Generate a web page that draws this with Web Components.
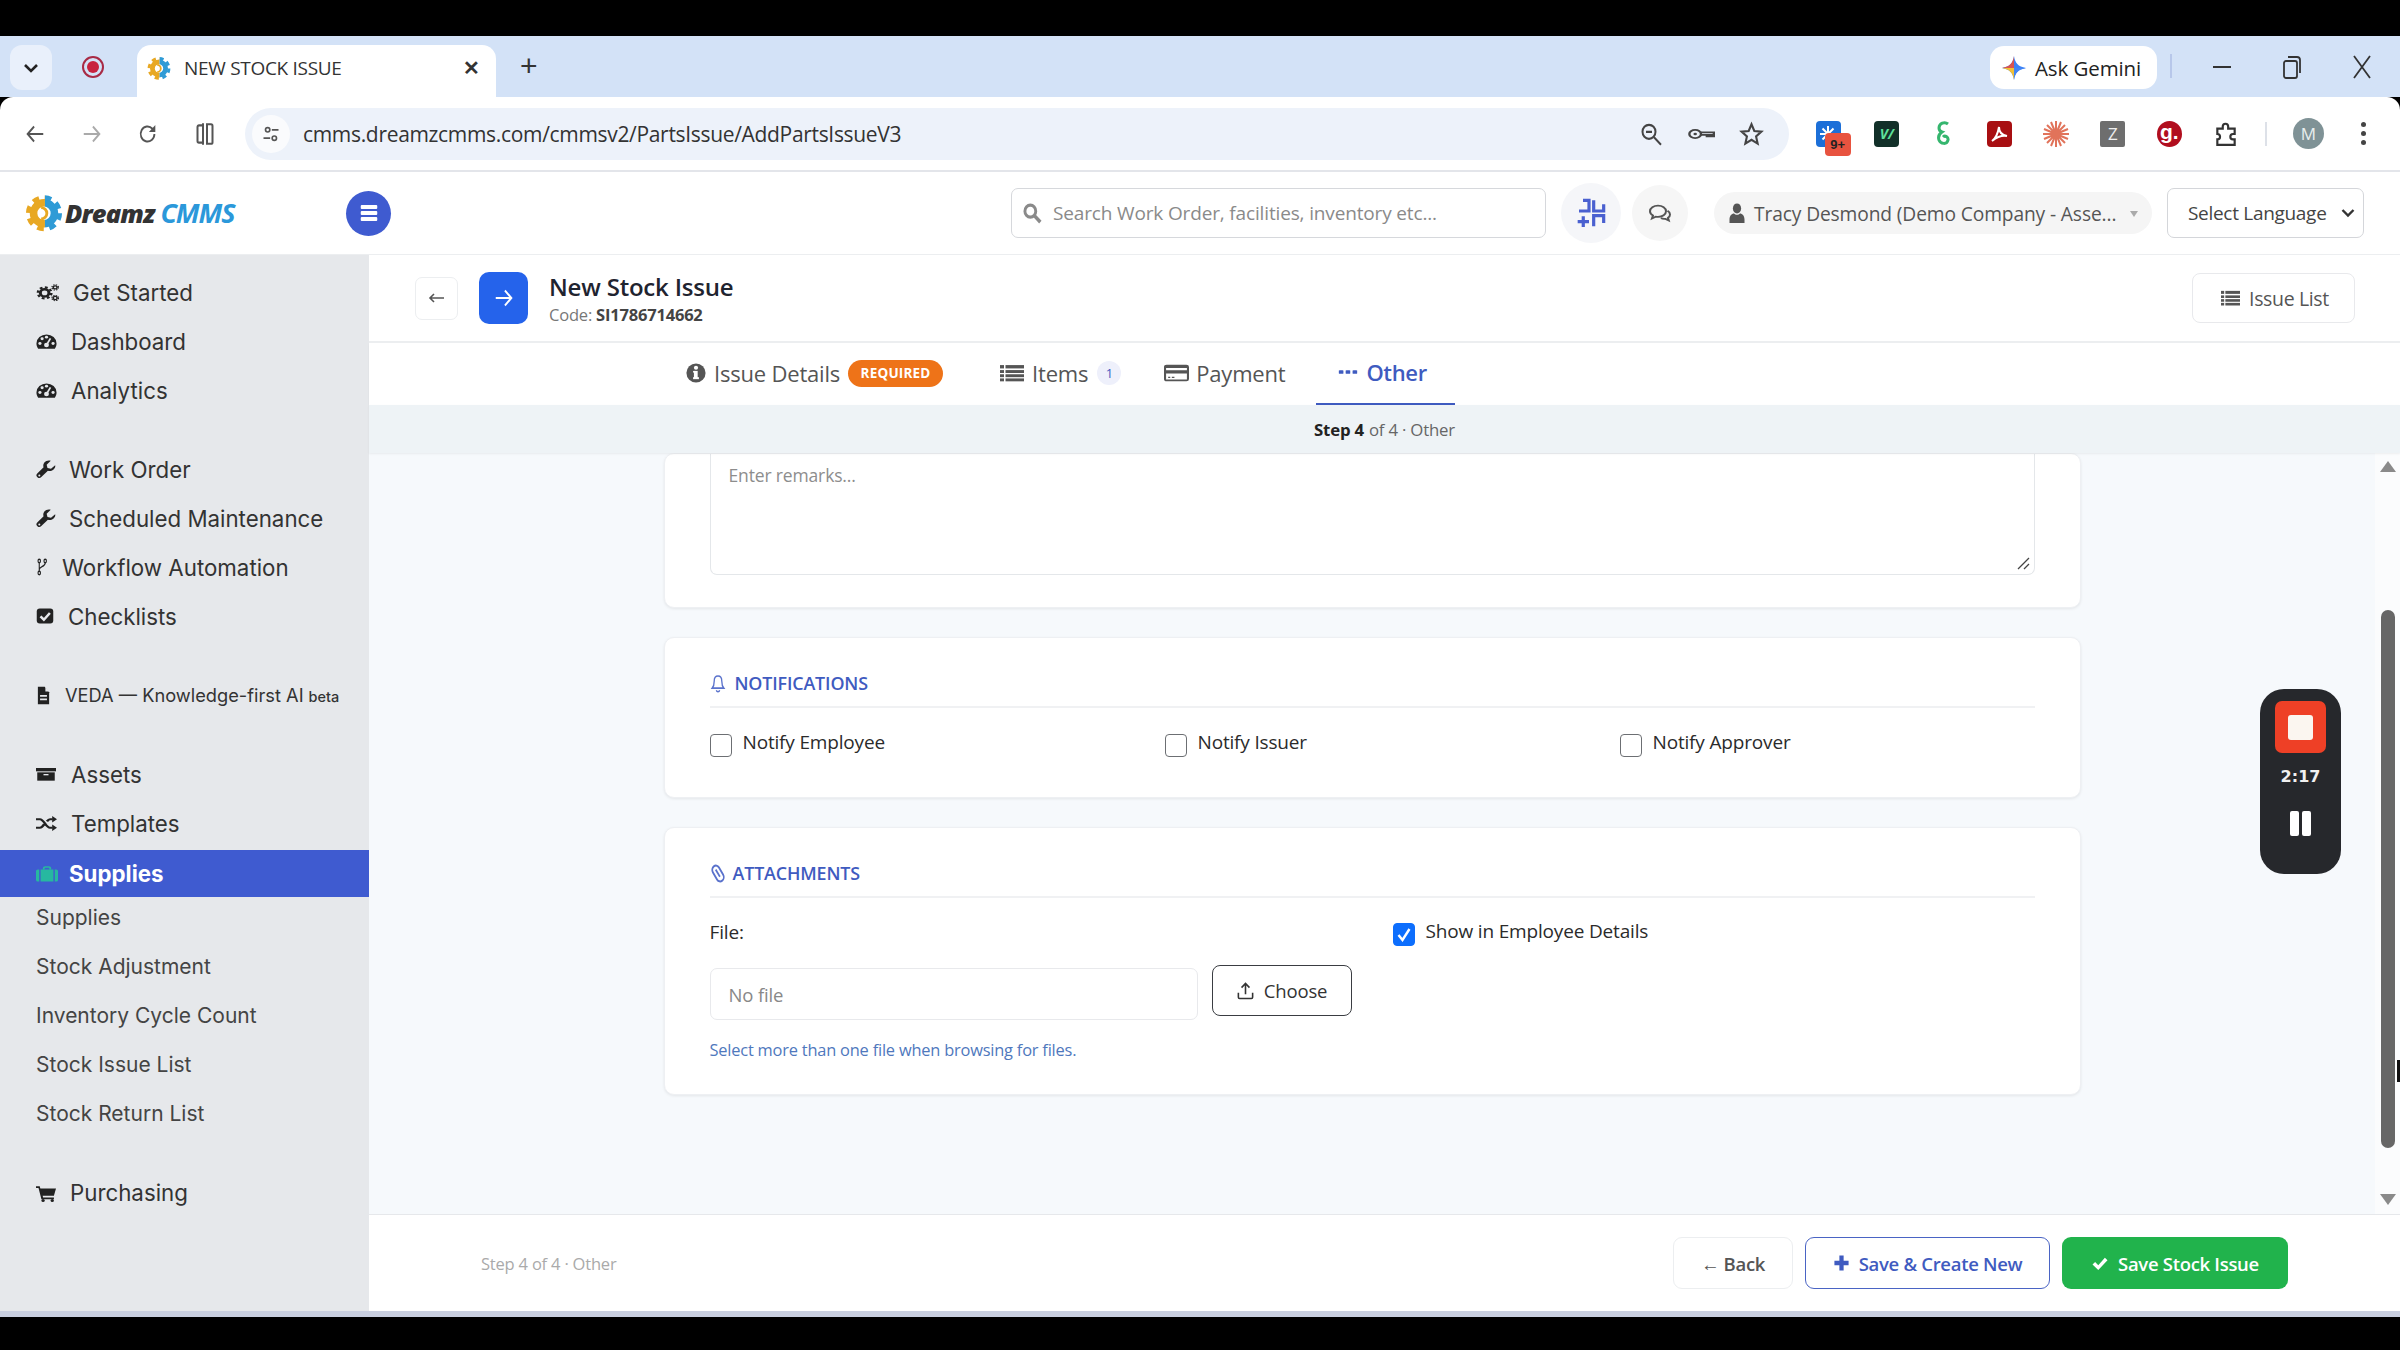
<!DOCTYPE html>
<html lang="en"><head><meta charset="utf-8"><title>New Stock Issue</title>
<style>
html,body{margin:0;padding:0;background:#000;height:1350px;overflow:hidden}
body{font-family:"Open Sans","Noto Sans",sans-serif;color:#222}
stock-app{display:block}
</style></head><body>
<stock-app></stock-app>
<script>
const ICONS={
back:'<path d="M21 12H4M11 5l-7 7 7 7" fill="none" stroke="currentColor" stroke-width="2"/>',
reload:'<path d="M19 12a7.5 7.5 0 1 1-2.2-5.3L19 9" fill="none" stroke="currentColor" stroke-width="2"/><path d="M20 3v7h-7z" fill="currentColor"/>',
split:'<path d="M10 4H6a1.5 1.5 0 0 0-1.5 1.5v13A1.5 1.5 0 0 0 6 20h4M14 3h4a1.5 1.5 0 0 1 1.5 1.5v15a1.5 1.5 0 0 1-1.5 1.5h-4zM10 2v20" fill="none" stroke="currentColor" stroke-width="2"/>',
tune:'<circle cx="8" cy="7" r="2.6" fill="none" stroke="currentColor" stroke-width="2"/><circle cx="16" cy="17" r="2.6" fill="none" stroke="currentColor" stroke-width="2"/><path d="M13 7h8M3 17h8" stroke="currentColor" stroke-width="2"/>',
zoomout:'<circle cx="10" cy="10" r="6.5" fill="none" stroke="currentColor" stroke-width="2"/><path d="M15 15l7 7M7 10h6" stroke="currentColor" stroke-width="2"/>',
key:'<circle cx="7" cy="12" r="5" fill="none" stroke="currentColor" stroke-width="2"/><circle cx="7" cy="12" r="1.5" fill="currentColor"/><path d="M12 10h11v5h-2v-2h-2v2h-2v-2h-5" fill="none" stroke="currentColor" stroke-width="2"/>',
star:'<path d="M12 3l2.7 6.2 6.8.6-5.1 4.5 1.5 6.6L12 17.4l-5.900 3.5 1.5-6.600L2.500 9.800l6.800-.6z" fill="none" stroke="currentColor" stroke-width="2"/>',
puzzle:'<path d="M4 7h5V5a2.500 2.500 0 0 1 5 0v2h6v5h-1.500a2.500 2.500 0 0 0 0 5H20v5H4v-5a2.500 2.500 0 0 0 0-5z" fill="none" stroke="currentColor" stroke-width="2"/>',
search:'<circle cx="10" cy="10" r="6.500" fill="none" stroke="currentColor" stroke-width="3.500"/><path d="M15 15l7 7" stroke="currentColor" stroke-width="4"/>',
grid:'<g fill="none" stroke="currentColor" stroke-width="2.400"><path d="M3 10.500h7.500V2.500H6M14 2.500v8h7.500V5.500M2 18.500h8.500M6.200 14.500v8M14 22v-8h7.500v5.500"/></g>',
chat:'<g fill="none" stroke="currentColor" stroke-width="2"><path d="M10 4C5.600 4 2 6.700 2 10c0 1.900 1.200 3.600 3 4.700L4 18l3.700-2c.7.2 1.500.3 2.300.3 4.400 0 8-2.700 8-6.300S14.400 4 10 4z"/><path d="M19.500 9.500c1.500 1 2.500 2.500 2.500 4 0 1.500-.8 2.800-2 3.700l.8 3-3.300-1.800c-1.500.2-3.300 0-4.500-.9"/></g>',
user:'<circle cx="12" cy="7" r="5.500" fill="currentColor"/><path d="M2 23v-4c0-4 3-6.500 6-6.500 1 1 2.500 1.500 4 1.500s3-.5 4-1.500c3 0 6 2.500 6 6.500v4z" fill="currentColor"/>',
cogs:'<g fill="none" stroke="currentColor"><circle cx="9" cy="12.500" r="4.500" stroke-width="3.200"/><circle cx="9" cy="12.500" r="7" stroke-width="2.600" stroke-dasharray="3 2.500"/><circle cx="20" cy="5.500" r="2" stroke-width="1.600"/><circle cx="20" cy="5.500" r="3.400" stroke-width="1.300" stroke-dasharray="1.500 1.200"/><circle cx="20" cy="19" r="2" stroke-width="1.600"/><circle cx="20" cy="19" r="3.400" stroke-width="1.300" stroke-dasharray="1.500 1.200"/></g>',
dash:'<path d="M12 3A11.500 11.500 0 0 0 .5 14.500c0 2.500.8 4.700 2 6.500h19c1.200-1.800 2-4 2-6.500A11.500 11.500 0 0 0 12 3z" fill="currentColor"/><g fill="#e6e8eb"><circle cx="4.500" cy="14.500" r="1.800"/><circle cx="7" cy="8.500" r="1.800"/><circle cx="12" cy="6.500" r="1.800"/><circle cx="19.500" cy="14.500" r="1.800"/></g><path d="M16.500 8L12.800 15" stroke="#e6e8eb" stroke-width="2"/><circle cx="12" cy="16.500" r="2.800" fill="#e6e8eb"/>',
wrench:'<path d="M23 6.500l-5 4.600-4.200-1-1-4.100L17.700 1c-3-.9-6 0-7.700 2.200-1.400 1.800-1.600 4.100-.9 6L1.500 17a3.300 3.300 0 0 0 4.900 4.500l7.900-7.900c2.100.7 4.700.2 6.500-1.400 1.900-1.600 2.700-3.700 2.200-5.700z" fill="currentColor"/><circle cx="4" cy="19.500" r="1.200" fill="#e6e8eb"/>',
fork:'<g fill="none" stroke="currentColor" stroke-width="2"><circle cx="6" cy="4" r="2.300"/><circle cx="17" cy="4" r="2.300"/><circle cx="6" cy="20" r="2.300"/><path d="M6 6.500v11M17 6.500c0 5-11 5-11 9"/></g>',
check:'<rect x="1" y="2" width="22" height="20" rx="4" fill="currentColor"/><path d="M6 12.500l4.500 4.500L18.500 8" fill="none" stroke="#e6e8eb" stroke-width="3.400"/>',
file:'<path d="M3 1h11l7 7v15H3z" fill="currentColor"/><path d="M15 1v6h6" fill="#e6e8eb"/><path d="M6.500 12.500h11M6.500 17h11" stroke="#e6e8eb" stroke-width="2.200"/>',
archive:'<rect x="0" y="3" width="24" height="5" fill="currentColor"/><path d="M1.500 9.500h21V22h-21z" fill="currentColor"/><rect x="9" y="12" width="6" height="2" fill="#e6e8eb"/>',
random:'<g fill="none" stroke="currentColor" stroke-width="3"><path d="M0 6h4.500c4.500 0 7 12 11.500 12h3M0 18h4.500c2 0 3.500-2.300 4.800-4.800M12.500 9c1-1.600 2.200-3 3.500-3h3"/></g><path d="M18.500 1.500l5.500 4.500-5.500 4.500zM18.500 13.500l5.500 4.500-5.500 4.500z" fill="currentColor"/>',
brief:'<path d="M8.500 6V4a1.500 1.500 0 0 1 1.500-1.500h4A1.500 1.500 0 0 1 15.500 4v2" fill="none" stroke="currentColor" stroke-width="2"/><path d="M5 6h14v16H5z" fill="currentColor"/><path d="M0 8a2 2 0 0 1 2-2h1.500v16H2a2 2 0 0 1-2-2zM24 8a2 2 0 0 0-2-2h-1.500v16H22a2 2 0 0 0 2-2z" fill="currentColor"/>',
cart:'<path d="M0 3h4.500l.7 3H24l-2.500 9.500H8l.5 2.500h13v2.200H6.500L3 5.200H0z" fill="currentColor"/><circle cx="8.500" cy="22" r="2" fill="currentColor"/><circle cx="19.500" cy="22" r="2" fill="currentColor"/>',
info:'<circle cx="12" cy="12" r="11.500" fill="currentColor"/><rect x="9.500" y="9.500" width="4.500" height="9.500" fill="#fff"/><rect x="8.500" y="17" width="7" height="2.400" fill="#fff"/><rect x="8.500" y="9.500" width="3" height="2" fill="#fff"/><circle cx="12" cy="5.700" r="2.500" fill="#fff"/>',
list:'<g fill="currentColor"><rect x="0" y="2.500" width="4" height="4"/><rect x="0" y="8.500" width="4" height="3.500"/><rect x="0" y="13.500" width="4" height="3.500"/><rect x="0" y="18.500" width="4" height="3.500"/><rect x="5.500" y="2.500" width="18.500" height="4"/><rect x="5.500" y="8.500" width="18.500" height="3.500"/><rect x="5.500" y="13.500" width="18.500" height="3.500"/><rect x="5.500" y="18.500" width="18.500" height="3.500"/></g>',
card:'<path d="M2.500 3h19A2.500 2.500 0 0 1 24 5.500v13a2.500 2.500 0 0 1-2.500 2.500h-19A2.500 2.500 0 0 1 0 18.500v-13A2.500 2.500 0 0 1 2.500 3zM2 6.500V9h20V6.500zM2 12.500V19h20v-6.500z" fill="currentColor" fill-rule="evenodd"/><path d="M4 16h2v1.500H4zM7.500 16H10v1.500H7.500z" fill="currentColor"/>',
dots:'<g fill="currentColor"><rect x="1" y="8.500" width="5.500" height="7" rx="1"/><rect x="9.200" y="8.500" width="5.500" height="7" rx="1"/><rect x="17.500" y="8.500" width="5.500" height="7" rx="1"/></g>',
bell:'<path d="M12 2.500c-3.800 0-5.700 2.800-5.700 6.500 0 4-.8 6.500-3 8.800h17.400c-2.200-2.300-3-4.800-3-8.800 0-3.700-1.900-6.500-5.700-6.500zM9.500 20.500a2.600 2.600 0 0 0 5 0" fill="none" stroke="currentColor" stroke-width="2"/>',
clip:'<g transform="rotate(-35 12 12)" fill="none" stroke="currentColor" stroke-width="2.600"><rect x="6.500" y="1" width="11" height="22" rx="5.500"/><path d="M12 6v11"/></g>',
upload:'<path d="M12 16V3M7 8l5-5 5 5M3 14v5.500A1.500 1.500 0 0 0 4.500 21h15a1.500 1.500 0 0 0 1.500-1.500V14" fill="none" stroke="currentColor" stroke-width="2"/>',
plus:'<path d="M9 2h6v7h7v6h-7v7H9v-7H2V9h7z" fill="currentColor"/>',
tick:'<path d="M2 13.500l3.500-3.500 4.200 4.300L18.500 4 22 7.500 9.700 21z" fill="currentColor"/>',
bars:'<g fill="currentColor"><rect x="3" y="4" width="18" height="4" rx="1"/><rect x="3" y="10" width="18" height="4" rx="1"/><rect x="3" y="16" width="18" height="4" rx="1"/></g>'
};
class UiIcon extends HTMLElement{
 constructor(){super();this.attachShadow({mode:'open'})}
 connectedCallback(){
  const w=this.getAttribute('w')||20,h=this.getAttribute('h')||w,n=this.getAttribute('name');
  this.shadowRoot.innerHTML=`<style>:host{display:inline-flex;flex:none;line-height:0}svg{display:block}</style><svg width="${w}" height="${h}" viewBox="0 0 24 24" preserveAspectRatio="none">${ICONS[n]||''}</svg>`;
 }
}
customElements.define('ui-icon',UiIcon);
function el(name,html){
 customElements.define(name,class extends HTMLElement{
  constructor(){super();this.attachShadow({mode:'open'}).innerHTML=html}
 });
}
const GEAR=(s)=>`<svg width="${s}" height="${s*1.12}" viewBox="0 0 40 44"><defs><clipPath id="l"><rect x="0" y="0" width="21" height="44"/></clipPath><clipPath id="r"><rect x="21" y="0" width="19" height="44"/></clipPath></defs><g clip-path="url(#l)" fill="none" stroke="#e8a823"><circle cx="20" cy="22" r="11" stroke-width="8"/><circle cx="20" cy="22" r="16.500" stroke-width="5" stroke-dasharray="7 6"/></g><g clip-path="url(#r)" fill="none" stroke="#2f9bd6"><circle cx="20" cy="22" r="11" stroke-width="8"/><circle cx="20" cy="22" r="16.500" stroke-width="5" stroke-dasharray="7 6"/></g><path d="M17 16a6 6 0 0 1 0 12" fill="none" stroke="#e8a823" stroke-width="3"/></svg>`;

el('browser-chrome',`<style>
:host{display:block;font-family:"Open Sans","Noto Sans",sans-serif}
.strip{height:61px;background:#d3e2f7;display:flex;align-items:flex-start;color:#222;padding-right:3px}
.chev{margin:9px 0 0 10px;width:42px;height:45px;border-radius:12px;background:#e9f0fb;display:flex;align-items:center;justify-content:center}
.rec{margin:20px 0 0 30px;width:22px;height:22px;border-radius:50%;border:2px solid #a82a45;box-sizing:border-box;display:flex;align-items:center;justify-content:center}
.rec i{width:12px;height:12px;border-radius:50%;background:#c8233f}
.tab{margin:9px 0 0 33px;width:359px;height:52px;box-sizing:border-box;background:#fff;border-radius:14px 14px 0 0;display:flex;align-items:center;padding:0 16px 6px 10px;}
.tab span{margin-left:13px;font-size:19px;flex:1;color:#333;letter-spacing:-.3px;white-space:nowrap}
.tab b{font-weight:700;font-size:20px;color:#333;font-family:"Liberation Sans"}
.plus{margin:13px 0 0 24px;font-size:30px;line-height:34px;color:#333;font-family:"Liberation Sans"}
.grow{flex:1}
.gem{margin-top:10px;width:167px;height:43px;border-radius:14px;background:#fff;display:flex;align-items:center;box-sizing:border-box;padding-left:12px;gap:9px;font-size:20.5px;font-weight:500;color:#222;letter-spacing:-.1px;white-space:nowrap}
.div{width:2px;height:24px;background:#b7c7ea;margin:18px 0 0 13px}
.win{margin:0;width:70px;height:61px;display:flex;align-items:center;justify-content:center;padding-bottom:0;color:#333}
.tool{height:75px;background:#fff;border-radius:13px 13px 0 0;display:flex;align-items:center;box-sizing:border-box;border-bottom:2px solid #e3e5ea;padding-left:7px;color:#555}
.c{width:56.5px;display:flex;justify-content:center;flex:none}
.pill{margin-left:12px;width:1544px;height:52px;border-radius:26px;background:#edf2fa;display:flex;align-items:center;flex:none}
.tune{margin-left:7px;width:38px;height:38px;border-radius:50%;background:#fafbfd;display:flex;align-items:center;justify-content:center}
.url{margin-left:13px;font-size:21px;color:#333;letter-spacing:-.32px;white-space:nowrap;flex:1}
.pill .ri{display:flex;align-items:center;margin-right:25px;gap:24px;color:#444}
.ex{margin-left:13px;display:flex;align-items:center}
.sq{width:25px;height:26px;border-radius:4px;display:flex;align-items:center;justify-content:center;color:#fff;font-weight:700;position:relative;font-size:14px}
.badge{position:absolute;left:9px;top:12px;width:26px;height:23px;border-radius:4px;background:#e8533f;color:#222;font:700 13px "Liberation Sans";display:flex;align-items:center;justify-content:center}
.sep{width:2px;height:24px;background:#dde1e8;margin-left:11px}
.av{margin-left:26px;width:31px;height:31px;border-radius:50%;background:#7f9296;color:#e8eeee;font-size:17px;display:flex;align-items:center;justify-content:center}
.keb{margin-left:37px;display:flex;flex-direction:column;gap:4px}
.keb i{width:5px;height:5px;border-radius:50%;background:#444}
</style>
<div class="strip">
 <div class="chev"><svg width="16" height="12" viewBox="0 0 16 12"><path d="M2 3l6 6 6-6" fill="none" stroke="#222" stroke-width="2.600"/></svg></div>
 <div class="rec"><i></i></div>
 <div class="tab"><span style="flex:none;margin:0;line-height:0">${GEAR(24)}</span><span>NEW STOCK ISSUE</span><b>✕</b></div>
 <div class="plus">+</div>
 <div class="grow"></div>
 <div class="gem"><svg width="24" height="24" viewBox="0 0 24 24" style="flex:none"><path d="M12 0c1 7 4 10.500 12 12-8 1.500-11 5-12 12-1-7-4-10.500-12-12 8-1.500 11-5 12-12z" fill="#3b82f6"/><path d="M12 0c-1 7-4 10.500-12 12l12 0z" fill="#d9534f"/><path d="M0 12c8 1.500 11 5 12 12l0-12z" fill="#f2c037"/><path d="M12 24c1-7 4-10.500 12-12l-12 0z" fill="#4285f4"/></svg>Ask Gemini</div>
 <div class="div"></div>
 <div class="win" style="margin-left:15px"><svg width="18" height="2" viewBox="0 0 18 2"><rect width="18" height="2" fill="#333"/></svg></div>
 <div class="win"><svg width="18" height="24" viewBox="0 0 18 24" fill="none" stroke="#333" stroke-width="1.800"><rect x="1" y="6" width="13" height="17" rx="2"/><path d="M5 2h9a3 3 0 0 1 3 3v13"/></svg></div>
 <div class="win"><svg width="18" height="24" viewBox="0 0 18 24"><path d="M1 1l16 22M17 1L1 23" stroke="#333" stroke-width="1.800"/></svg></div>
</div>
<div class="tool">
 <div class="c"><ui-icon name="back" w="22" h="26"></ui-icon></div>
 <div class="c" style="color:#aaa"><ui-icon name="back" w="22" h="26" style="transform:scaleX(-1)"></ui-icon></div>
 <div class="c"><ui-icon name="reload" w="22" h="24"></ui-icon></div>
 <div class="c"><ui-icon name="split" w="24" h="26"></ui-icon></div>
 <div class="pill">
  <div class="tune"><ui-icon name="tune" w="20" h="20"></ui-icon></div>
  <div class="url">cmms.dreamzcmms.com/cmmsv2/PartsIssue/AddPartsIssueV3</div>
  <div class="ri"><ui-icon name="zoomout" w="24" h="26"></ui-icon><ui-icon name="key" w="28" h="20"></ui-icon><ui-icon name="star" w="25" h="26"></ui-icon></div>
 </div>
 <div class="ex" style="margin-left:13px">
  <div class="c"><div class="sq" style="background:#1c6fd8;margin-left:-4px"><svg width="18" height="18" viewBox="0 0 18 18"><path d="M9 1v16M1 9h16M3.500 3.500l11 11M14.500 3.500l-11 11" stroke="#fff" stroke-width="2"/></svg><div class="badge">9+</div></div></div>
  <div class="c"><div class="sq" style="background:#123029;color:#5ee29b;font-style:italic">V/</div></div>
  <div class="c"><svg width="15" height="27" viewBox="0 0 15 27"><path d="M12 4a5.500 5.500 0 0 0-9 4c0 3 3 4 3 4-3 2-4 5-3 8 1.500 4 8 5 9 0 .6-3-3-5-5-3" fill="none" stroke="#35b66e" stroke-width="3"/></svg></div>
  <div class="c"><div class="sq" style="background:#a80f12"><svg width="19" height="19" viewBox="0 0 19 19"><path d="M2 17c3-2 6-8 7-14 0 4 2 8 8 9-5-1-10 1-15 5z" fill="none" stroke="#fff" stroke-width="2"/></svg></div></div>
  <div class="c"><svg width="26" height="26" viewBox="0 0 26 26"><g stroke="#e1735a" stroke-width="2"><path d="M13 0v26M0 13h26M4 4l18 18M22 4L4 22M8 1l10 24M18 1L8 25M1 8l24 10M25 8L1 18"/></g></svg></div>
  <div class="c"><div class="sq" style="background:#6e6e6e;border-radius:2px;font-weight:400;font-size:17px;color:#eee">Z</div></div>
  <div class="c"><div class="sq" style="background:#b10e1e;border-radius:50%;font:700 21px 'Liberation Sans';padding-bottom:4px;box-sizing:border-box">g.</div></div>
  <div class="c" style="color:#333"><ui-icon name="puzzle" w="26" h="26"></ui-icon></div>
 </div>
 <div class="sep"></div>
 <div class="av">M</div>
 <div class="keb"><i></i><i></i><i></i></div>
</div>`);

el('app-header',`<style>
:host{display:flex;height:83px;background:#fff;align-items:center;box-sizing:border-box;border-bottom:1px solid #eceef0;font-family:"Open Sans","Noto Sans",sans-serif}
.logo{margin-left:25px;width:210px;display:flex;align-items:center;gap:2px;font-style:italic;font-weight:800;font-size:25.5px;letter-spacing:-.9px;white-space:nowrap}
.d{color:#333}.m{color:#2b98da;margin-left:4px;font-weight:700;font-size:27px;letter-spacing:-1.1px}
.ham{margin-left:111px;width:45px;height:45px;border-radius:50%;background:#3f5bd0;color:#fff;display:flex;align-items:center;justify-content:center}
.search{margin-left:620px;width:535px;height:50px;box-sizing:border-box;border:1px solid #d6d8dc;border-radius:7px;display:flex;align-items:center;padding-left:10px;color:#8a8a8a;gap:11px;font-size:19px;letter-spacing:-.15px;white-space:nowrap}
.ci{width:60px;height:60px;border-radius:50%;background:#f5f6f9;display:flex;align-items:center;justify-content:center;margin-left:15px;color:#4a60d0}
.ci2{width:56px;height:56px;background:#f6f6f6;margin-left:11px;color:#555}
.user{margin-left:26px;width:438px;height:42px;border-radius:21px;background:#f5f5f5;display:flex;align-items:center;box-sizing:border-box;padding-left:14px;color:#555;font-size:19.2px;letter-spacing:-.12px;white-space:nowrap}
.user span{margin-left:8px;flex:1}
.car{width:0;height:0;border:4px solid transparent;border-top:6px solid #aaa;margin:5px 14px 0 0}
.sel{margin-left:15px;width:197px;height:50px;box-sizing:border-box;border:1px solid #d4d6da;border-radius:7px;display:flex;align-items:center;padding:0 8px 0 20px;font-size:19px;color:#444;letter-spacing:-.3px;justify-content:space-between;white-space:nowrap}
</style>
<div class="logo">${GEAR(38)}<span class="d">Dreamz</span><span class="m">CMMS</span></div>
<div class="ham"><ui-icon name="bars" w="22" h="24"></ui-icon></div>
<div class="search"><ui-icon name="search" w="20" h="22"></ui-icon>Search Work Order, facilities, inventory etc...</div>
<div class="ci"><ui-icon name="grid" w="32" h="32"></ui-icon></div>
<div class="ci ci2"><ui-icon name="chat" w="24" h="22"></ui-icon></div>
<div class="user"><ui-icon name="user" w="18" h="22"></ui-icon><span>Tracy Desmond (Demo Company - Asse...</span><i class="car"></i></div>
<div class="sel">Select Language<svg width="14" height="10" viewBox="0 0 14 10"><path d="M1.500 2l5.500 5.500L12.500 2" fill="none" stroke="#333" stroke-width="2.400"/></svg></div>`);

customElements.define('nav-item',class extends HTMLElement{
 constructor(){super();this.attachShadow({mode:'open'})}
 connectedCallback(){
  const g=this.getAttribute('gap')||14,w=this.getAttribute('iw')||21,h=this.getAttribute('ih')||19,n=this.getAttribute('icon');
  this.shadowRoot.innerHTML=`<style>:host{display:flex;height:49px;align-items:center;padding-left:36px;font:400 22.3px Inter,sans-serif;color:#333;white-space:nowrap}
  :host([small]){font-size:18.25px}
  :host([active]){height:47px;margin-top:2.5px;background:#3f5bd0;color:#fff;font-weight:700}
  :host([sub]){height:41px;font-size:21px;color:#444}
  ui-icon{margin-right:${g}px;color:${this.hasAttribute('active')?'#27b8a0':'#222'}}
  ::slotted(small){font-size:14.5px;margin-left:5px;font-weight:500;color:#333;align-self:center;margin-top:2px}</style>
  ${n?`<ui-icon name="${n}" w="${w}" h="${h}"></ui-icon>`:''}<slot></slot>`;
 }
});

el('side-nav',`<style>
:host{display:block;width:369px;flex:none;background:#e6e8eb;padding-top:12.5px;box-sizing:border-box;overflow:hidden}
.g{margin-bottom:30px}
.subs{display:flex;flex-direction:column;gap:8px}
</style>
<div class="g">
<nav-item icon="cogs" gap="14" iw="23">Get Started</nav-item>
<nav-item icon="dash" gap="14" iw="21">Dashboard</nav-item>
<nav-item icon="dash" gap="14" iw="21">Analytics</nav-item>
</div>
<div class="g">
<nav-item icon="wrench" gap="13" iw="20">Work Order</nav-item>
<nav-item icon="wrench" gap="13" iw="20">Scheduled Maintenance</nav-item>
<nav-item icon="fork" gap="13" iw="13" ih="18">Workflow Automation</nav-item>
<nav-item icon="check" gap="14" iw="18" ih="18">Checklists</nav-item>
</div>
<div class="g">
<nav-item small icon="file" gap="14" iw="15" ih="19">VEDA — Knowledge-first AI <small>beta</small></nav-item>
</div>
<div>
<nav-item icon="archive" gap="15" iw="20" ih="16">Assets</nav-item>
<nav-item icon="random" gap="14" iw="21" ih="17">Templates</nav-item>
<nav-item active icon="brief" gap="11" iw="22" ih="18">Supplies</nav-item>
</div>
<div class="subs">
<nav-item sub>Supplies</nav-item>
<nav-item sub>Stock Adjustment</nav-item>
<nav-item sub>Inventory Cycle Count</nav-item>
<nav-item sub>Stock Issue List</nav-item>
<nav-item sub>Stock Return List</nav-item>
</div>
<div style="margin-top:34px"><nav-item icon="cart" gap="14" iw="20" ih="18">Purchasing</nav-item></div>`);

el('page-head',`<style>
:host{display:flex;height:88px;box-sizing:border-box;border-bottom:2px solid #eceef0;background:#fff;align-items:center;padding:0 45px 0 46px;flex:none}
.bk{width:43px;height:43px;box-sizing:border-box;border:1px solid #eceef0;border-radius:7px;display:flex;align-items:center;justify-content:center;color:#555}
.bl{width:49px;height:52px;margin-left:21px;border-radius:10px;background:#2563eb;color:#fff;display:flex;align-items:center;justify-content:center}
.t{margin-left:21px;flex:1}
h1{margin:0;font-size:24px;font-weight:600;color:#1f2430;line-height:32px;letter-spacing:-.2px}
p{margin:0;font-size:16.5px;line-height:23px;color:#777;letter-spacing:-.2px}
p b{color:#444;font-weight:700}
.list{width:163px;height:50px;box-sizing:border-box;border:1px solid #e8e9ec;border-radius:8px;display:flex;align-items:center;justify-content:center;gap:9px;color:#555;font-size:19.5px;font-weight:500;letter-spacing:-.35px;padding-left:3px}
</style>
<div class="bk"><svg width="17" height="12" viewBox="0 0 17 12"><path d="M16 6H2M6 2L2 6l4 4" fill="none" stroke="currentColor" stroke-width="1.600"/></svg></div>
<div class="bl"><ui-icon name="back" w="22" h="26" style="transform:scaleX(-1)"></ui-icon></div>
<div class="t"><h1>New Stock Issue</h1><p>Code: <b>SI1786714662</b></p></div>
<div class="list"><ui-icon name="list" w="19" h="18"></ui-icon>Issue List</div>`);

el('tab-bar',`<style>
:host{display:flex;height:62px;box-sizing:border-box;background:#fff;padding-left:295px;flex:none;gap:9px;font-size:22px;font-weight:500;color:#555;letter-spacing:-.2px;box-shadow:0 1px 2px rgba(0,0,0,.05);z-index:1}
.t{display:flex;align-items:center;padding:0 22px 2px;white-space:nowrap;height:62px;box-sizing:border-box}
.t2{padding:0 12px 2px 26px}
.t3 ui-icon{margin-right:7px}
.on{color:#3f5bc0;border-bottom:2px solid #3f5bc0;font-weight:600;width:139px;letter-spacing:-.35px}
ui-icon{margin-right:8px}
.req{margin-left:8px;width:95px;height:27px;border-radius:14px;background:#ee7318;color:#fff;font-size:13.5px;font-weight:700;display:flex;align-items:center;justify-content:center;letter-spacing:.2px}
.n{margin-left:9px;width:24px;height:24px;border-radius:50%;background:#eef0fb;color:#3f5bc0;font-size:13px;display:flex;align-items:center;justify-content:center}
</style>
<div class="t"><ui-icon name="info" w="20" h="20"></ui-icon>Issue Details<span class="req">REQUIRED</span></div>
<div class="t t2"><ui-icon name="list" w="24" h="20"></ui-icon>Items<span class="n">1</span></div>
<div class="t t3"><ui-icon name="card" w="25" h="22"></ui-icon>Payment</div>
<div class="t on"><ui-icon name="dots" w="20" h="12"></ui-icon>Other</div>`);

el('step-bar',`<style>
:host{display:flex;height:48px;flex:none;align-items:center;justify-content:center;background:#eef3f6;font-size:16.8px;color:#666;letter-spacing:-.2px;box-shadow:0 1px 2px rgba(0,0,0,.06);z-index:1}
b{color:#222;font-weight:700;margin-right:5px}
</style><b>Step 4</b> of 4 · Other`);

el('form-card',`<style>
:host{display:block;background:#fff;border:1px solid #eef0f3;border-radius:10px;box-shadow:0 1px 3px rgba(0,0,0,.08);box-sizing:border-box;padding:0 45px 0 45px;width:1417px;flex:none}
</style><slot></slot>`);

customElements.define('card-head',class extends HTMLElement{
 constructor(){super();this.attachShadow({mode:'open'})}
 connectedCallback(){
  const n=this.getAttribute('icon'),g=this.getAttribute('gap')||9;
  this.shadowRoot.innerHTML=`<style>:host{display:flex;align-items:center;height:70px;box-sizing:border-box;padding-top:22px;border-bottom:2px solid #f0f1f3;color:#3f5bc0;font-size:17.9px;font-weight:600;letter-spacing:-.15px}ui-icon{margin:0 ${g}px 0 0;color:#5a72cc}</style><ui-icon name="${n}" w="16" h="19"></ui-icon><slot></slot>`;
 }
});
customElements.define('check-field',class extends HTMLElement{
 constructor(){super();this.attachShadow({mode:'open'})}
 connectedCallback(){
  const on=this.hasAttribute('checked');
  this.shadowRoot.innerHTML=`<style>:host{display:flex;align-items:flex-start;font-size:19px;font-weight:500;color:#2b2b2b;letter-spacing:-.17px;line-height:24px;white-space:nowrap}
  .b{width:22px;height:23px;box-sizing:border-box;border-radius:4px;margin:0 11px 0 0;flex:none;border:1.5px solid ${on?'#0d6efd':'#6c6f73'};background:${on?'#0d6efd':'#fff'};display:flex;align-items:center;justify-content:center}</style>
  <span class="b">${on?'<svg width="14" height="15" viewBox="0 0 14 15"><path d="M1.500 8l4 5L12.500 2" fill="none" stroke="#fff" stroke-width="2.400"/></svg>':''}</span><span style="margin-top:-4px"><slot></slot></span>`;
 }
});

el('scroll-rail',`<style>
:host{display:flex;flex-direction:column;align-items:center;width:25px;flex:none;background:#fbfcfd;box-sizing:border-box;padding:8px 0 0 0;height:761px}
.up,.dn{width:0;height:0;border:8px solid transparent}
.up{border-top:0;border-bottom:11px solid #8a8a8a}
.th{width:14px;height:538px;border-radius:7px;background:#666;margin-top:138px}
.dn{border-bottom:0;border-top:11px solid #8a8a8a;margin-top:46px}
</style><div class="up"></div><div class="th"></div><div class="dn"></div>`);

el('rec-widget',`<style>
:host{position:absolute;top:236px;right:59px;width:81px;height:185px;border-radius:24px;background:#26282c;display:flex;flex-direction:column;align-items:center;box-sizing:border-box;padding-top:12px}
.s{width:51px;height:52px;border-radius:7px;background:#ee4026;display:flex;align-items:center;justify-content:center}
.s i{width:25px;height:25px;border-radius:3px;background:#fbf6f0}
.t{margin-top:13px;font:700 16px "DejaVu Sans",sans-serif;color:#f1f1f1;line-height:22px}
.p{margin-top:23px;display:flex;gap:3px}
.p i{width:9px;height:25px;border-radius:2px;background:#fff}
</style><div class="s"><i></i></div><div class="t">2:17</div><div class="p"><i></i><i></i></div>`);

el('form-pane',`<style>
:host{display:flex;height:761px;background:#f6f9fc;flex:none;position:relative;overflow:hidden}
.col{flex:1;display:flex;flex-direction:column;align-items:center;gap:29px}
.ta{height:121px;box-sizing:border-box;border:1px solid #e4e7ea;border-top:0;border-radius:0 0 7px 7px;padding:9px 18px;font-size:17.5px;color:#8d8d8d;letter-spacing:-.15px;position:relative;line-height:25px}
.ta svg{position:absolute;right:4px;bottom:4px}
.pad{height:32px}
.three{display:grid;grid-template-columns:repeat(3,455px);margin-top:26px;height:63px}
.two{display:grid;grid-template-columns:683px 1fr;margin-top:22px;height:174px}
.lb{font-size:19px;font-weight:500;color:#2b2b2b;line-height:24px;height:45px;letter-spacing:-.15px}
.row{display:flex;align-items:flex-start}
.inp{margin-top:3px;width:488px;height:52px;box-sizing:border-box;border:1px solid #e8e9ec;border-radius:7px;display:flex;align-items:center;padding-left:18px;font-size:18.5px;color:#888;letter-spacing:-.15px}
.ch{margin-left:14px;width:140px;height:51px;box-sizing:border-box;border:1.5px solid #3a3d42;border-radius:8px;display:flex;align-items:center;justify-content:center;gap:9px;font-size:18.5px;font-weight:500;color:#333;letter-spacing:-.15px}
.help{margin-top:18px;font-size:16.4px;color:#4f78bd;line-height:24px;letter-spacing:-.2px}
.cf{padding-top:3px}
.cur{position:absolute;right:0;top:607px;width:3px;height:22px;background:#111}
</style>
<div class="col">
 <form-card>
  <div class="ta">Enter remarks...<svg width="14" height="14" viewBox="0 0 14 14"><path d="M13 2L2 13M13 8l-5 5" stroke="#444" stroke-width="1.300"/></svg></div>
  <div class="pad"></div>
 </form-card>
 <form-card>
  <card-head icon="bell">NOTIFICATIONS</card-head>
  <div class="three"><check-field>Notify Employee</check-field><check-field>Notify Issuer</check-field><check-field>Notify Approver</check-field></div>
 </form-card>
 <form-card>
  <card-head icon="clip" gap="7">ATTACHMENTS</card-head>
  <div class="two">
   <div><div class="lb">File:</div>
    <div class="row"><div class="inp">No file</div><div class="ch"><ui-icon name="upload" w="19" h="20"></ui-icon>Choose</div></div>
    <div class="help">Select more than one file when browsing for files.</div>
   </div>
   <div class="cf"><check-field checked>Show in Employee Details</check-field></div>
  </div>
 </form-card>
</div>
<scroll-rail></scroll-rail>
<rec-widget></rec-widget>
<div class="cur"></div>`);

el('action-bar',`<style>
:host{display:flex;height:97px;flex:none;box-sizing:border-box;border-top:1px solid #e6e8eb;background:#fff;align-items:center;padding:0 112px 0 112px;gap:12px;font-size:18.5px;font-weight:600;letter-spacing:-.3px}
.s{flex:1;font-size:16.5px;font-weight:400;color:#aaa;letter-spacing:-.2px}
.b{height:52px;box-sizing:border-box;border-radius:9px;display:flex;align-items:center;justify-content:center;gap:9px;white-space:nowrap}
.k{width:120px;border:1px solid #eceef0;color:#555;gap:6px}
.n{width:245px;border:1.5px solid #4a64c4;color:#3f5bc0}
.g{width:226px;background:#21b34c;color:#fff}
</style>
<div class="s">Step 4 of 4 · Other</div>
<div class="b k">← Back</div>
<div class="b n"><ui-icon name="plus" w="17" h="18"></ui-icon>Save &amp; Create New</div>
<div class="b g"><ui-icon name="tick" w="18" h="17"></ui-icon>Save Stock Issue</div>`);

el('main-pane',`<style>:host{flex:1;display:flex;flex-direction:column;min-width:0;background:#fff}</style>
<page-head></page-head><tab-bar></tab-bar><step-bar></step-bar><form-pane></form-pane><action-bar></action-bar>`);

el('stock-app',`<style>
:host{display:flex;flex-direction:column;height:1350px;padding-top:36px;box-sizing:border-box}
.shell{display:flex;height:1056px;flex:none}
.edge{height:6px;background:#c9cfe0;flex:none}
</style>
<browser-chrome></browser-chrome><app-header></app-header>
<div class="shell"><side-nav></side-nav><main-pane></main-pane></div>
<div class="edge"></div>`);
</script>
</body></html>
